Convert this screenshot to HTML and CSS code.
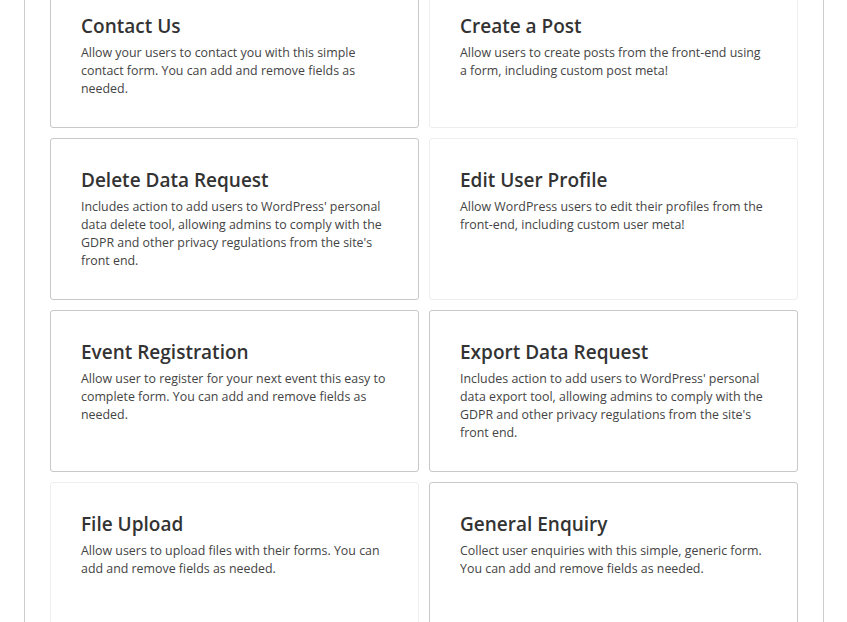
FILE: index.html
```html
<!DOCTYPE html>
<html lang="en">
<head>
<meta charset="utf-8">
<title>Form Templates</title>
<link rel="stylesheet" href="styles.css">
</head>
<body>
<div class="panel">
  <div class="grid">
    <div class="card">
      <h3 class="card-title">Contact Us</h3>
      <p class="card-desc">Allow your users to contact you with this simple contact form. You can add and remove fields as needed.</p>
    </div>
    <div class="card faint">
      <h3 class="card-title">Create a Post</h3>
      <p class="card-desc">Allow users to create posts from the front-end using a form, including custom post meta!</p>
    </div>
    <div class="card">
      <h3 class="card-title">Delete Data Request</h3>
      <p class="card-desc">Includes action to add users to WordPress' personal data delete tool, allowing admins to comply with the GDPR and other privacy regulations from the site's front end.</p>
    </div>
    <div class="card faint">
      <h3 class="card-title">Edit User Profile</h3>
      <p class="card-desc">Allow WordPress users to edit their profiles from the front-end, including custom user meta!</p>
    </div>
    <div class="card">
      <h3 class="card-title">Event Registration</h3>
      <p class="card-desc">Allow user to register for your next event this easy to complete form. You can add and remove fields as needed.</p>
    </div>
    <div class="card">
      <h3 class="card-title">Export Data Request</h3>
      <p class="card-desc">Includes action to add users to WordPress' personal data export tool, allowing admins to comply with the GDPR and other privacy regulations from the site's front end.</p>
    </div>
    <div class="card faint">
      <h3 class="card-title">File Upload</h3>
      <p class="card-desc">Allow users to upload files with their forms. You can add and remove fields as needed.</p>
    </div>
    <div class="card">
      <h3 class="card-title">General Enquiry</h3>
      <p class="card-desc">Collect user enquiries with this simple, generic form. You can add and remove fields as needed.</p>
    </div>
  </div>
</div>
</body>
</html>
```

FILE: styles.css
```css
html, body {
  margin: 0;
  padding: 0;
  background: #fff;
}
body {
  font-family: "Open Sans", "Noto Sans", sans-serif;
  color: #444;
  overflow: hidden;
}
.panel {
  margin: -16px 0 0 24px;
  width: 748px;
  padding: 0 25px 40px;
  border-left: 1px solid #ccc;
  border-right: 1px solid #ccc;
  min-height: 700px;
}
.grid {
  display: grid;
  grid-template-columns: 369px 369px;
  column-gap: 10px;
  row-gap: 10px;
}
.card {
  box-sizing: border-box;
  min-height: 144px;
  border: 1px solid #c8c8c8;
  border-radius: 3px;
  padding: 29px 30px 29px;
  background: #fff;
}
.card.faint {
  border-color: #eeeeee;
}
.card-title {
  margin: 0 0 6px;
  font-size: 19px;
  line-height: 24px;
  font-weight: 600;
  color: #333;
}
.card-desc {
  margin: 0;
  font-size: 12.4px;
  line-height: 18px;
  color: #444;
}
```
